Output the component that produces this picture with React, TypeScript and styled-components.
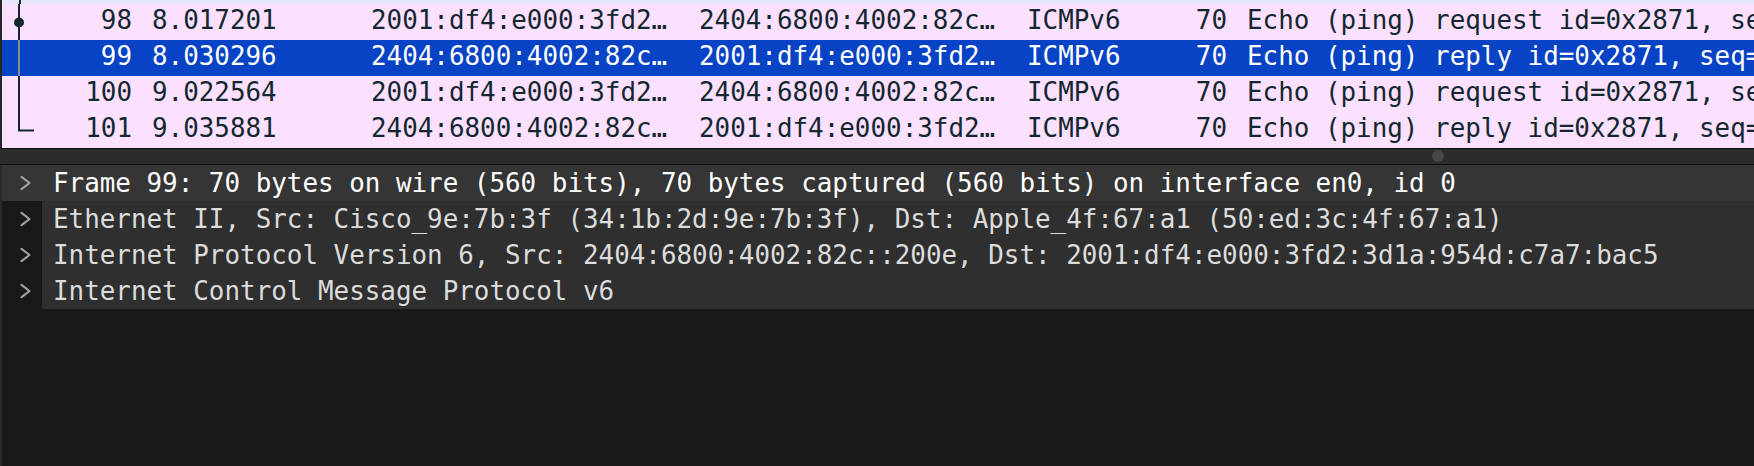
import styled, { createGlobalStyle } from 'styled-components';

type Link = 'start' | 'pass' | 'end';

type Packet = {
	no: number;
	time: string;
	source: string;
	destination: string;
	protocol: string;
	length: number;
	info: string;
	link: Link;
};

const packets: Packet[] = [
	{
		no: 98,
		time: '8.017201',
		source: '2001:df4:e000:3fd2…',
		destination: '2404:6800:4002:82c…',
		protocol: 'ICMPv6',
		length: 70,
		info: 'Echo (ping) request id=0x2871, seq=5/1280, hop limit=64 (reply in 99)',
		link: 'start'
	},
	{
		no: 99,
		time: '8.030296',
		source: '2404:6800:4002:82c…',
		destination: '2001:df4:e000:3fd2…',
		protocol: 'ICMPv6',
		length: 70,
		info: 'Echo (ping) reply id=0x2871, seq=5/1280, hop limit=116 (request in 98)',
		link: 'pass'
	},
	{
		no: 100,
		time: '9.022564',
		source: '2001:df4:e000:3fd2…',
		destination: '2404:6800:4002:82c…',
		protocol: 'ICMPv6',
		length: 70,
		info: 'Echo (ping) request id=0x2871, seq=6/1536, hop limit=64 (reply in 101)',
		link: 'pass'
	},
	{
		no: 101,
		time: '9.035881',
		source: '2404:6800:4002:82c…',
		destination: '2001:df4:e000:3fd2…',
		protocol: 'ICMPv6',
		length: 70,
		info: 'Echo (ping) reply id=0x2871, seq=6/1536, hop limit=116 (request in 100)',
		link: 'end'
	}
];

const details = [
	'Frame 99: 70 bytes on wire (560 bits), 70 bytes captured (560 bits) on interface en0, id 0',
	'Ethernet II, Src: Cisco_9e:7b:3f (34:1b:2d:9e:7b:3f), Dst: Apple_4f:67:a1 (50:ed:3c:4f:67:a1)',
	'Internet Protocol Version 6, Src: 2404:6800:4002:82c::200e, Dst: 2001:df4:e000:3fd2:3d1a:954d:c7a7:bac5',
	'Internet Control Message Protocol v6'
];

const GlobalStyle = createGlobalStyle`
	html, body {
		margin: 0;
		padding: 0;
		background: #181818;
	}
`;

const Window = styled.div`
	width: 1754px;
	height: 466px;
	overflow: hidden;
	display: flex;
	flex-direction: column;
	background: #181818;
	font-family: 'DejaVu Sans Mono', 'Liberation Mono', monospace;
	font-size: 25.9px;
`;

const PacketList = styled.div`
	display: flex;
	flex-direction: column;
	background: #fce0ff;
	border-left: 2px solid #262626;
	border-bottom: 1px solid #0b0b0b;
`;

const ScrolledOffRow = styled.div`
	height: 4px;
	background: #e7e6ff;
	padding-left: 17px;
	display: flex;
`;

const StubLine = styled.div`
	width: 2px;
	height: 100%;
	background: #12272e;
`;

const PacketRow = styled.div<{ $selected: boolean }>`
	display: grid;
	grid-template-columns: 150px 219px 328px 328px 133px 87px 1fr;
	height: 36px;
	line-height: 32px;
	background: ${(p) => (p.$selected ? '#0743c4' : '#fce0ff')};
	color: ${(p) => (p.$selected ? '#ffffff' : '#12272e')};
	white-space: pre;
`;

const Cell = styled.div<{ $right?: boolean }>`
	overflow: hidden;
	text-align: ${(p) => (p.$right ? 'right' : 'left')};
	padding-right: ${(p) => (p.$right ? '20px' : '0')};
`;

const NoCell = styled.div`
	display: flex;
	justify-content: space-between;
	padding-right: 20px;
`;

const Splitter = styled.div`
	position: relative;
	height: 15px;
	flex-shrink: 0;
	background: #2c2c2c;
	border-bottom: 1px solid #0f0f0f;
`;

const Grip = styled.div`
	position: absolute;
	left: 1432px;
	top: 1px;
	width: 12px;
	height: 12px;
	border-radius: 50%;
	background: #474747;
`;

const DetailPane = styled.div`
	flex: 1;
	display: flex;
	flex-direction: column;
	border-left: 2px solid #2a2a2a;
`;

const TreeRow = styled.div<{ $active: boolean }>`
	display: flex;
	height: 36px;
	background: ${(p) => (p.$active ? '#353535' : 'transparent')};
	color: ${(p) => (p.$active ? '#ffffff' : '#dcdcdc')};
`;

const Expander = styled.div`
	width: 40px;
	flex-shrink: 0;
	display: flex;
	align-items: center;
	padding-left: 17px;
	box-sizing: border-box;
`;

const Label = styled.div<{ $active: boolean }>`
	flex: 1;
	padding-left: 11px;
	line-height: 36px;
	white-space: pre;
	overflow: hidden;
	background: ${(p) => (p.$active ? 'transparent' : '#2f2f2f')};
`;

const TreeGlyph = ({ link, selected }: { link: Link; selected: boolean }) => {
	const stroke = selected ? '#8c8c8c' : '#12272e';
	return (
		<svg width="36" height="36" viewBox="0 0 36 36">
			{link === 'end' ? (
				<path d="M17 0 V18.5 H32" fill="none" stroke={stroke} strokeWidth="2" />
			) : (
				<line x1="17" y1="0" x2="17" y2="36" stroke={stroke} strokeWidth="2" />
			)}
			{link === 'start' && <circle cx="17" cy="18.5" r="5" fill={stroke} />}
		</svg>
	);
};

const Chevron = () => (
	<svg width="13" height="16" viewBox="0 0 13 16">
		<polyline
			points="2.5,1.8 10.5,8 2.5,14.2"
			fill="none"
			stroke="#a0a0a0"
			strokeWidth="2.2"
			strokeLinecap="round"
			strokeLinejoin="round"
		/>
	</svg>
);

const App = () => {
	return (
		<Window>
			<GlobalStyle />
			<PacketList>
				<ScrolledOffRow>
					<StubLine />
				</ScrolledOffRow>
				{packets.map((packet) => {
					const selected = packet.no === 99;
					return (
						<PacketRow key={packet.no} $selected={selected}>
							<NoCell>
								<TreeGlyph link={packet.link} selected={selected} />
								<span>{packet.no}</span>
							</NoCell>
							<Cell>{packet.time}</Cell>
							<Cell>{packet.source}</Cell>
							<Cell>{packet.destination}</Cell>
							<Cell>{packet.protocol}</Cell>
							<Cell $right>{packet.length}</Cell>
							<Cell>{packet.info}</Cell>
						</PacketRow>
					);
				})}
			</PacketList>
			<Splitter>
				<Grip />
			</Splitter>
			<DetailPane>
				{details.map((text, i) => (
					<TreeRow key={text} $active={i === 0}>
						<Expander>
							<Chevron />
						</Expander>
						<Label $active={i === 0}>{text}</Label>
					</TreeRow>
				))}
			</DetailPane>
		</Window>
	);
};

export default App;
